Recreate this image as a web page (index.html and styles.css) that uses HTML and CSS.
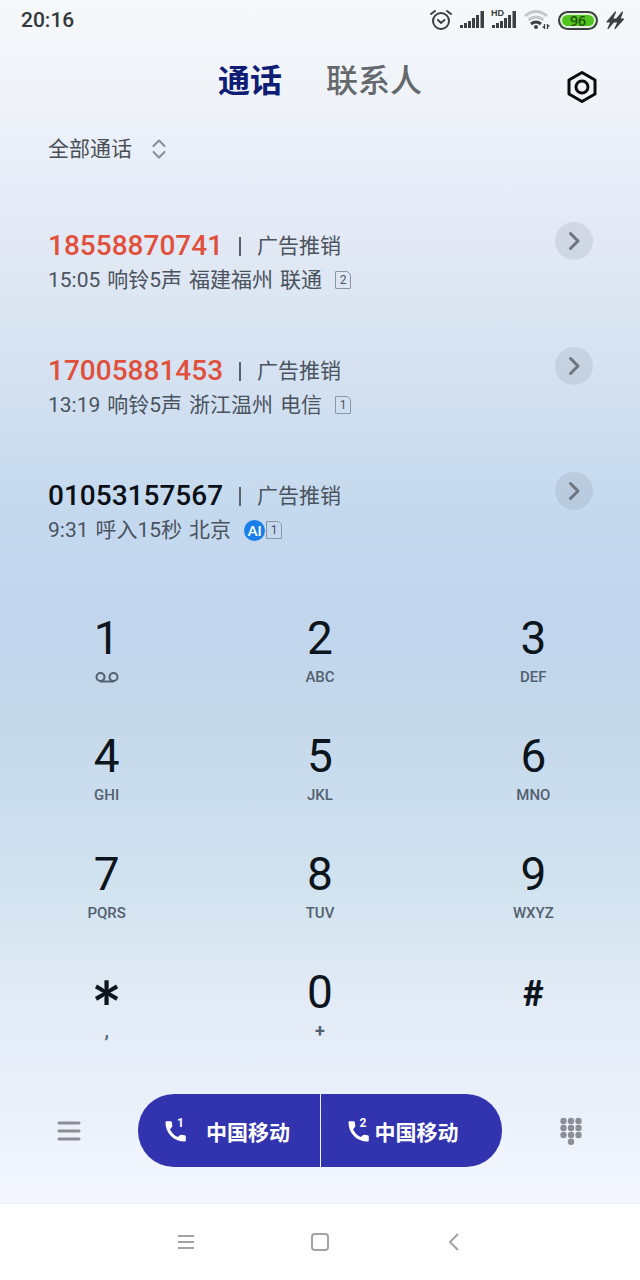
FILE: index.html
```html
<!DOCTYPE html>
<html lang="zh-CN">
<head>
    <meta charset="UTF-8">
    <meta name="viewport" content="width=device-width, initial-scale=1.0">
    <title>通话</title>
    <link rel="stylesheet" href="styles.css">
</head>
<body>
    <!-- shared shapes -->
    <svg class="defs" width="0" height="0" aria-hidden="true">
        <symbol id="signal" viewBox="0 0 24 18">
            <path d="M0 14h3v3H0zM4 12h3v5H4zM8 10h3v7H8zM12 7h3v10h-3zM16 4h3v13h-3zM20.500 0h3.500v17h-3.500z" fill="#3c4043"/>
        </symbol>
        <symbol id="chevron" viewBox="0 0 38 38">
            <path d="M15.500 11.500l7.500 7.500-7.500 7.500" fill="none" stroke="#6f7580" stroke-width="3" stroke-linecap="round" stroke-linejoin="round"/>
        </symbol>
        <symbol id="phone" viewBox="0 0 24 24">
            <path d="M1.500 3.500C1.500 2.700 2 2.200 2.800 2.200H6.500c.7 0 1.200.4 1.300 1.100l.5 3.400c.1.600-.1 1.100-.5 1.500L6 10.200c1.700 3.600 4.200 6.200 7.900 7.900l1.900-1.900c.4-.4.900-.6 1.500-.5l3.400.5c.7.1 1.100.6 1.100 1.300v3.800c0 .8-.5 1.300-1.300 1.300C9.800 22.600 1.500 14.200 1.500 3.500z" fill="#fff"/>
        </symbol>
    </svg>

    <header class="status-bar">
        <time>20:16</time>
        <div class="status-icons">
            <svg width="22" height="22" viewBox="0 0 22 22" fill="none" stroke="#3c4043" stroke-width="2" stroke-linecap="round">
                <circle cx="11" cy="12" r="8"/>
                <path d="M1 5l4-3M21 5l-4-3M8 11l3 3 3.500-3"/>
            </svg>
            <svg width="24" height="18"><use href="#signal"/></svg>
            <span class="hd-signal">
                <svg width="24" height="18" viewBox="0 0 24 18" fill="#3c4043">
                    <path d="M0 14h3v3H0zM4 12h3v5H4zM8 10h3v7H8zM12 7h3v10h-3zM16 4h3v13h-3zM20.500 0h3.500v17h-3.500z"/>
                </svg>
                <span class="hd">HD</span>
            </span>
            <svg class="wifi" width="26" height="22" viewBox="0 0 26 22" fill="none" stroke-width="3">
                <path d="M1 7q11-9 22 0M4.500 11q7.500-6 15 0" stroke="#c5c8cb"/>
                <path d="M7 15q5-4 10 0" stroke="#3c4043"/>
                <circle cx="12" cy="18" r="2" fill="#3c4043"/>
                <path d="M20.500 15v5M23.500 15v5M18.500 18h2M23.500 17h2" stroke="#3c4043" stroke-width="1.300"/>
            </svg>
            <span class="battery">96</span>
            <svg width="18" height="20" viewBox="0 0 18 20" fill="#3c4043">
                <path d="M9.500 2L1 12h4l-3 6.500L10 9H6.500zM16.500 2L8 12h4l-3 6.500L17.500 9H14z" stroke="#3c4043" stroke-width="1.200" stroke-linejoin="round"/>
            </svg>
        </div>
    </header>

    <main>
        <div class="top">
            <nav class="tabs">
                <a class="active" href="#calls">通话</a>
                <a href="#contacts">联系人</a>
            </nav>
            <button class="settings" aria-label="设置">
                <svg width="32" height="34" viewBox="0 0 32 34" fill="none" stroke="#0b0b0d" stroke-width="3" stroke-linejoin="round">
                    <path d="M16 2.500l13 7.500v14l-13 7.500L3 24V10z"/>
                    <circle cx="16" cy="17" r="6"/>
                </svg>
            </button>
        </div>

        <label class="filter">
            <select aria-label="通话筛选">
                <option>全部通话</option>
            </select>
            <svg width="14" height="20" viewBox="0 0 14 20" fill="none" stroke="#878d98" stroke-width="2" stroke-linecap="round" stroke-linejoin="round">
                <path d="M1.500 7L7 1.500 12.500 7M1.500 13L7 18.500l5.500-5.500"/>
            </svg>
        </label>

        <ul class="calls" id="calls">
            <li class="call missed">
                <div class="info">
                    <p class="title"><span class="number">18558870741</span><span class="bar"></span>广告推销</p>
                    <p class="detail"><span>15:05</span><span>响铃5声</span><span>福建福州</span><span>联通</span><span class="sim">2</span></p>
                </div>
                <button class="more" aria-label="详情"><svg width="38" height="38"><use href="#chevron"/></svg></button>
            </li>
            <li class="call missed">
                <div class="info">
                    <p class="title"><span class="number">17005881453</span><span class="bar"></span>广告推销</p>
                    <p class="detail"><span>13:19</span><span>响铃5声</span><span>浙江温州</span><span>电信</span><span class="sim">1</span></p>
                </div>
                <button class="more" aria-label="详情"><svg width="38" height="38"><use href="#chevron"/></svg></button>
            </li>
            <li class="call">
                <div class="info">
                    <p class="title"><span class="number">01053157567</span><span class="bar"></span>广告推销</p>
                    <p class="detail"><span>9:31</span><span>呼入15秒</span><span>北京</span><span class="ai">AI</span><span class="sim">1</span></p>
                </div>
                <button class="more" aria-label="详情"><svg width="38" height="38"><use href="#chevron"/></svg></button>
            </li>
        </ul>

        <div class="keypad">
            <button><span class="digit">1</span>
                <span class="letters"><svg width="24" height="12" viewBox="0 0 24 12" fill="none" stroke="#536070" stroke-width="2"><circle cx="5.500" cy="6" r="4"/><circle cx="18.500" cy="6" r="4"/><path d="M5 10.500h14"/></svg></span>
            </button>
            <button><span class="digit">2</span><span class="letters">ABC</span></button>
            <button><span class="digit">3</span><span class="letters">DEF</span></button>
            <button><span class="digit">4</span><span class="letters">GHI</span></button>
            <button><span class="digit">5</span><span class="letters">JKL</span></button>
            <button><span class="digit">6</span><span class="letters">MNO</span></button>
            <button><span class="digit">7</span><span class="letters">PQRS</span></button>
            <button><span class="digit">8</span><span class="letters">TUV</span></button>
            <button><span class="digit">9</span><span class="letters">WXYZ</span></button>
            <button><span class="digit star">*</span><span class="letters mark">,</span></button>
            <button><span class="digit">0</span><span class="letters mark">+</span></button>
            <button><span class="digit hash">#</span></button>
        </div>

        <div class="actions">
            <button class="side" aria-label="菜单">
                <svg width="24" height="22" viewBox="0 0 24 22" stroke="#8b8e94" stroke-width="3" stroke-linecap="round">
                    <path d="M2 3h20M2 11h20M2 19h20"/>
                </svg>
            </button>
            <div class="dial">
                <button class="sim-one">
                    <span class="handset"><svg width="24" height="24"><use href="#phone"/></svg><sup>1</sup></span>
                    中国移动
                </button>
                <button>
                    <span class="handset"><svg width="24" height="24"><use href="#phone"/></svg><sup>2</sup></span>
                    中国移动
                </button>
            </div>
            <button class="side" aria-label="收起键盘">
                <svg width="22" height="28" viewBox="0 0 22 28" fill="#8b8e94">
                    <circle cx="3.500" cy="4" r="3.200"/><circle cx="11" cy="4" r="3.200"/><circle cx="18.500" cy="4" r="3.200"/>
                    <circle cx="3.500" cy="11" r="3.200"/><circle cx="11" cy="11" r="3.200"/><circle cx="18.500" cy="11" r="3.200"/>
                    <circle cx="3.500" cy="18" r="3.200"/><circle cx="11" cy="18" r="3.200"/><circle cx="18.500" cy="18" r="3.200"/>
                    <circle cx="11" cy="24.800" r="3.200"/>
                </svg>
            </button>
        </div>
    </main>

    <footer class="nav-bar">
        <button aria-label="最近任务">
            <svg width="18" height="18" viewBox="0 0 18 18"><path d="M1 3h16M1 9h16M1 15h16"/></svg>
        </button>
        <button aria-label="主页">
            <svg width="18" height="18" viewBox="0 0 18 18"><rect x="1" y="1" width="16" height="16" rx="3"/></svg>
        </button>
        <button aria-label="返回">
            <svg width="18" height="18" viewBox="0 0 18 18"><path d="M13 1L5 9l8 8"/></svg>
        </button>
    </footer>
</body>
</html>
```
FILE: styles.css
```css
* {
    box-sizing: border-box;
}
body {
    margin: 0;
    min-height: 100vh;
    display: flex;
    flex-direction: column;
    font-family: Roboto, "Noto Sans CJK SC", sans-serif;
    font-size: 21px;
    color: #4b535e;
    background: linear-gradient(#f6f9fb 0%, #eef2f8 9%, #eaf0fa 11%, #e2e9f4 19%, #d2e0f0 31%, #c4d9ee 40%, #c1d6ed 50%, #c6d9ea 57%, #c9dcee 61%, #d1e2ef 69%, #e2ebf6 78%, #e9f0fa 86%, #f4f7ff 94%);
}
.defs {
    position: absolute;
}
button {
    padding: 0;
    border: 0;
    background: none;
    color: inherit;
    font: inherit;
    cursor: pointer;
}
svg {
    display: block;
}
main {
    flex: 1;
    display: flex;
    flex-direction: column;
}

/* status bar */
.status-bar {
    display: flex;
    justify-content: space-between;
    align-items: center;
    height: 40px;
    padding: 0 16px 0 21px;
}
.status-bar time {
    font-size: 21px;
    font-weight: 500;
    color: #33373b;
}
.status-icons {
    display: flex;
    align-items: center;
    gap: 8px;
}
.hd-signal {
    position: relative;
}
.hd {
    position: absolute;
    top: -2px;
    left: -1px;
    font: bold 9px/9px "Liberation Sans", sans-serif;
    color: #3c4043;
}
.battery {
    width: 40px;
    height: 19px;
    border: 2px solid #3c4043;
    border-radius: 10px;
    background: #52c41e;
    box-shadow: inset 0 0 0 2px #e4f2df;
    font: 500 14px/15px "Noto Sans", sans-serif;
    text-align: center;
    color: #1d4a10;
}

/* tabs */
.top {
    display: grid;
    grid-template-columns: 1fr auto 1fr;
    align-items: end;
    height: 64px;
    padding: 0 42px;
}
.tabs {
    grid-column: 2;
    display: flex;
    gap: 44px;
    font-size: 32px;
    line-height: 45px;
    font-weight: 500;
}
.tabs a {
    color: #65686c;
    text-decoration: none;
}
.tabs .active {
    color: #101d74;
    font-weight: bold;
}
.settings {
    justify-self: end;
}

/* call list */
.filter {
    display: flex;
    align-items: center;
    align-self: flex-start;
    gap: 20px;
    margin: 29px 48px 57px;
}
.filter select {
    appearance: none;
    padding: 0;
    border: 0;
    background: none;
    font: inherit;
    line-height: 32px;
    color: #4b4f55;
}
.calls {
    display: flex;
    flex-direction: column;
    gap: 50px;
    margin: 0;
    padding: 0 47px 0 48px;
    list-style: none;
}
.call {
    display: flex;
    justify-content: space-between;
    align-items: flex-start;
}
.info {
    padding-top: 7px;
}
.info p {
    display: flex;
    align-items: center;
    margin: 0;
    line-height: 34px;
}
.info .detail {
    gap: 7px;
}
.number {
    font-size: 28px;
    font-weight: 500;
    color: #0b1018;
}
.missed .number {
    color: #e0503c;
}
.bar {
    width: 2px;
    height: 19px;
    margin: 0 16px;
    background: #59616c;
}
.sim {
    width: 16px;
    height: 18px;
    margin-left: 6px;
    border: 1px solid #8d97a3;
    border-radius: 1px 5px 1px 1px;
    font-size: 12px;
    line-height: 16px;
    text-align: center;
}
.ai {
    width: 21px;
    height: 21px;
    margin-left: 6px;
    border-radius: 50%;
    background: #1a7fe8;
    color: #fff;
    font: bold 14px/21px Lato, sans-serif;
    text-align: center;
}
.ai + .sim {
    margin-left: -6px;
}
.more {
    border-radius: 50%;
    background: rgba(130, 140, 150, 0.18);
}

/* keypad */
.keypad {
    display: grid;
    grid-template-columns: repeat(3, 1fr);
    margin-top: 57px;
}
.keypad button {
    display: flex;
    flex-direction: column;
    align-items: center;
    height: 118px;
    padding-top: 10px;
}
.digit {
    height: 48px;
    font-size: 46px;
    line-height: 48px;
    font-weight: 400;
    color: #0c141c;
}
.star {
    font-family: Lato, sans-serif;
    font-size: 72px;
    line-height: 80px;
    font-weight: bold;
}
.hash {
    font-family: Lato, sans-serif;
    font-size: 36px;
    font-weight: bold;
}
.letters {
    display: flex;
    align-items: center;
    height: 18px;
    margin-top: 6px;
    font-size: 15px;
    line-height: 18px;
    font-weight: 500;
    color: #536070;
}
.mark {
    font-size: 18px;
    font-weight: bold;
}

/* call buttons */
.actions {
    display: grid;
    grid-template-columns: 138px 1fr 138px;
    align-items: center;
    margin: auto 0 36px;
}
.side {
    justify-self: center;
}
.dial {
    display: flex;
    gap: 1px;
    border-radius: 36px;
    overflow: hidden;
}
.dial button {
    flex: 1;
    display: flex;
    align-items: center;
    gap: 4px;
    height: 73px;
    padding-left: 26px;
    background: #3233ae;
    color: #fff;
    font-weight: bold;
}
.dial .sim-one {
    gap: 18px;
}
.handset {
    position: relative;
}
.handset sup {
    position: absolute;
    top: -2px;
    right: 4px;
    font: bold 12px/12px Roboto, sans-serif;
}

/* system navigation */
.nav-bar {
    display: flex;
    justify-content: center;
    gap: 116px;
    height: 77px;
    border-top: 1px solid #eef2f5;
    background: #fff;
}
.nav-bar svg {
    fill: none;
    stroke: #a3a3a3;
    stroke-width: 2;
}
```
